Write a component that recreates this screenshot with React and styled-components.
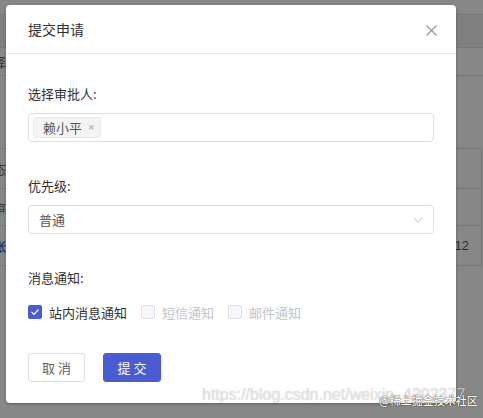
import React from "react";
import styled, { createGlobalStyle } from "styled-components";

const GlobalStyle = createGlobalStyle`
  html, body { margin: 0; padding: 0; }
  body {
    width: 483px;
    height: 418px;
    overflow: hidden;
    font-family: "Noto Sans CJK SC", "Microsoft YaHei", sans-serif;
  }
`;

const Page = styled.div`
  position: relative;
  width: 483px;
  height: 418px;
  overflow: hidden;
  background: #fff;
`;

/* ---------- page behind the modal ---------- */
const BgContent = styled.div`
  display: flex;
  flex-direction: column;
  padding-top: 14px;
`;

const BgRow = styled.div`
  height: ${(p) => p.$h}px;
  box-sizing: border-box;
  border-top: 1px solid #e2e2e2;
  border-bottom: ${(p) => (p.$last ? "1px solid #e2e2e2" : "none")};
  border-right: ${(p) => (p.$cell ? "1px solid #e2e2e2" : "none")};
  margin-right: ${(p) => (p.$cell ? "1px" : "0")};
  background: ${(p) => p.$bg || "#fff"};
  display: flex;
  align-items: center;
  justify-content: space-between;
  font-size: 13px;
  color: ${(p) => p.$color || "#555"};
`;

const BgLeft = styled.span`
  margin-left: -7px;
  color: ${(p) => p.$color || "#666"};
`;

const BgRight = styled.span`
  margin-right: 12px;
  font-family: "Liberation Sans", sans-serif;
  color: #555;
`;

const Overlay = styled.div`
  position: absolute;
  inset: 0;
  background: rgba(0, 0, 0, 0.47);
`;

/* ---------- dialog ---------- */
const Dialog = styled.div`
  position: absolute;
  left: 6px;
  top: 5px;
  width: 450px;
  background: #fff;
  border-radius: 4px;
  box-shadow: 0 1px 3px rgba(0, 0, 0, 0.3);
  display: flex;
  flex-direction: column;
`;

const Header = styled.div`
  height: 48px;
  border-bottom: 1px solid #e8e8e8;
  display: flex;
  align-items: center;
  justify-content: space-between;
  padding: 0 19px 0 22px;
`;

const Title = styled.span`
  font-size: 14px;
  color: #303133;
`;

const CloseBtn = styled.button`
  border: none;
  background: none;
  padding: 0;
  width: 12px;
  height: 12px;
  display: flex;
  align-items: center;
  justify-content: center;
  cursor: pointer;
  margin-top: 3px;
`;

const Body = styled.div`
  padding: 30px 22px 21px;
  display: flex;
  flex-direction: column;
`;

const Form = styled.div`
  display: flex;
  flex-direction: column;
  gap: 34px;
`;

const Field = styled.div`
  display: flex;
  flex-direction: column;
`;

const Label = styled.div`
  font-size: 13px;
  line-height: 20px;
  color: #303133;
  margin-bottom: ${(p) => p.$gap}px;
`;

const Control = styled.div`
  height: 29px;
  box-sizing: border-box;
  border: 1px solid #dcdfe6;
  border-radius: 4px;
  display: flex;
  align-items: center;
  justify-content: space-between;
  padding: ${(p) => (p.$multi ? "0 4px" : "0 10px 0 10px")};
`;

const Tag = styled.span`
  height: 21px;
  box-sizing: border-box;
  display: inline-flex;
  align-items: center;
  gap: 6px;
  padding: 0 6px 0 9px;
  background: #f4f4f5;
  border: 1px solid #e9e9eb;
  border-radius: 3px;
  font-size: 13px;
  color: #555;
`;

const TagClose = styled.span`
  font-family: "Liberation Sans", sans-serif;
  font-size: 11px;
  color: #a0a3a9;
  line-height: 1;
`;

const SelectText = styled.span`
  font-size: 13px;
  color: #555;
`;

const CheckRow = styled.div`
  display: flex;
  align-items: center;
  gap: 14px;
  height: 20px;
  margin-top: 14px;
`;

const CheckItem = styled.label`
  display: inline-flex;
  align-items: center;
  gap: 7px;
  font-size: 13px;
  color: ${(p) => (p.$disabled ? "#c0c4cc" : "#303133")};
`;

const Box = styled.span`
  width: 14px;
  height: 14px;
  box-sizing: border-box;
  border-radius: 2px;
  display: inline-flex;
  align-items: center;
  justify-content: center;
  background: ${(p) => (p.$checked ? "#4b5bd1" : "#f5f7fa")};
  border: 1px solid ${(p) => (p.$checked ? "#4b5bd1" : "#dcdfe6")};
`;

const Footer = styled.div`
  display: flex;
  gap: 18px;
  margin-top: 31px;
`;

const Button = styled.button`
  height: 29px;
  width: ${(p) => p.$w}px;
  box-sizing: border-box;
  border-radius: 3px;
  font-family: "Noto Sans CJK SC", sans-serif;
  font-size: 13px;
  letter-spacing: 3px;
  padding: 0 0 0 3px;
  cursor: pointer;
  border: 1px solid ${(p) => (p.$primary ? "#4b5bd1" : "#dcdfe6")};
  background: ${(p) => (p.$primary ? "#4b5bd1" : "#fff")};
  color: ${(p) => (p.$primary ? "#fff" : "#606266")};
`;

/* ---------- watermark ---------- */
const Watermark = styled.div`
  position: absolute;
  left: 202px;
  top: 386px;
  display: flex;
  align-items: center;
  pointer-events: none;
`;

const WmUrl = styled.span`
  font-family: "Liberation Sans", sans-serif;
  font-size: 16px;
  color: rgba(255, 255, 255, 0.6);
  text-shadow: 0 0 1px rgba(0, 0, 0, 0.3);
  white-space: nowrap;
`;

const WmBrand = styled.span`
  position: absolute;
  left: 177px;
  top: 6px;
  font-size: 11px;
  font-weight: 500;
  color: #fff;
  text-shadow: 0 0 1px rgba(0, 0, 0, 0.8), 0 0 1px rgba(0, 0, 0, 0.6);
  white-space: nowrap;
`;

const CloseIcon = () => (
  <svg width="11" height="11" viewBox="0 0 11 11">
    <path d="M0.5 0.5 L10.5 10.5 M10.5 0.5 L0.5 10.5" stroke="#909399" strokeWidth="1.1" fill="none" />
  </svg>
);

const ChevronIcon = () => (
  <svg width="10" height="6" viewBox="0 0 10 6">
    <polyline points="0.5,0.5 5,5.5 9.5,0.5" stroke="#c0c4cc" strokeWidth="1" fill="none" />
  </svg>
);

const CheckIcon = () => (
  <svg width="10" height="8" viewBox="0 0 10 8">
    <polyline points="1.5,4 4,6.5 8.5,1.5" stroke="#fff" strokeWidth="1.2" fill="none" />
  </svg>
);

export default function App() {
  return (
    <Page>
      <GlobalStyle />
      <BgContent>
        <BgRow $h={33} $bg="#f1f1f1" />
        <BgRow $h={28}>
          <BgLeft>择</BgLeft>
        </BgRow>
        <BgRow $h={73} />
        <BgRow $h={40} $cell>
          <BgLeft>态</BgLeft>
        </BgRow>
        <BgRow $h={37} $cell>
          <BgLeft>审</BgLeft>
        </BgRow>
        <BgRow $h={41} $cell $last>
          <BgLeft $color="#2b2bb0">张</BgLeft>
          <BgRight>2:12</BgRight>
        </BgRow>
      </BgContent>
      <Overlay />
      <Dialog>
        <Header>
          <Title>提交申请</Title>
          <CloseBtn aria-label="close">
            <CloseIcon />
          </CloseBtn>
        </Header>
        <Body>
          <Form>
            <Field>
              <Label $gap={9}>选择审批人:</Label>
              <Control $multi>
                <Tag>
                  赖小平
                  <TagClose>×</TagClose>
                </Tag>
              </Control>
            </Field>
            <Field>
              <Label $gap={9}>优先级:</Label>
              <Control>
                <SelectText>普通</SelectText>
                <ChevronIcon />
              </Control>
            </Field>
            <Field>
              <Label $gap={0}>消息通知:</Label>
              <CheckRow>
                <CheckItem>
                  <Box $checked>
                    <CheckIcon />
                  </Box>
                  站内消息通知
                </CheckItem>
                <CheckItem $disabled>
                  <Box />
                  短信通知
                </CheckItem>
                <CheckItem $disabled>
                  <Box />
                  邮件通知
                </CheckItem>
              </CheckRow>
            </Field>
          </Form>
          <Footer>
            <Button $w={57}>取消</Button>
            <Button $w={58} $primary>提交</Button>
          </Footer>
        </Body>
      </Dialog>
      <Watermark>
        <WmUrl>https://blog.csdn.net/weixin_4292377</WmUrl>
        <WmBrand>@稀土掘金技术社区</WmBrand>
      </Watermark>
    </Page>
  );
}
